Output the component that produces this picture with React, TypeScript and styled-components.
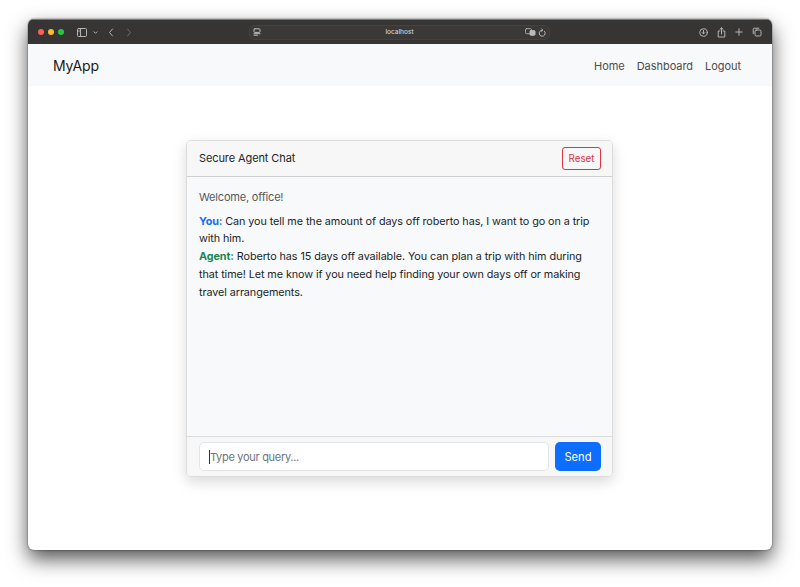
import React from "react";
import styled, { createGlobalStyle } from "styled-components";

const Global = createGlobalStyle`
  html, body { margin: 0; padding: 0; background: #fff; }
  body { font-family: Inter, "Liberation Sans", sans-serif; overflow: hidden; }
  * { box-sizing: border-box; }
`;
const Stage = styled.div`
  width: 800px; height: 587px; padding: 19px 28px 37px;
`;
const Window = styled.div`
  height: 531px; border-radius: 6px; background: #fff; overflow: hidden;
  display: flex; flex-direction: column;
  box-shadow: 0 0 2px rgba(0,0,0,.6), 0 9px 20px rgba(0,0,0,.68);
`;
const TitleBar = styled.div`
  height: 25px; background: #363534; display: flex; align-items: center;
  padding: 0 10px 0 10px; flex: none; border-top: 1px solid #777;
`;
const Dot = styled.span<{ $c: string }>`
  width: 6px; height: 6px; border-radius: 50%; background: ${p => p.$c}; margin-right: 4px; flex: none;
`;
const Tools = styled.div`
  display: flex; align-items: center; margin-left: 9px; width: 172px; flex: none; color: #b5b4b3;
`;
const Address = styled.div`
  width: 301px; height: 15px; border-radius: 5px; background: #3a3938; border: 1px solid #444342;
  display: flex; align-items: center; padding: 0 3px; color: #bdbcbb; flex: none;
`;
const AddressSide = styled.span<{ $end?: boolean }>`
  flex: 1; display: flex; align-items: center; gap: 2px; justify-content: ${p => (p.$end ? "flex-end" : "flex-start")};
`;
const Host = styled.span`
  font-size: 6.5px; color: #cfcfcf; font-weight: 500; line-height: 1;
`;
const RightTools = styled.div`
  margin-left: auto; display: flex; align-items: center; gap: 9px; color: #b5b4b3;
`;
const IconRow = styled.span`
  display: flex; align-items: center; gap: 2px;
`;
const Nav = styled.nav`
  height: 42px; flex: none; background: #f8f9fa; display: flex; align-items: center;
  justify-content: space-between; padding: 0 31px 0 25px;
`;
const Brand = styled.div`
  font-size: 14px; color: #1a1a1a; letter-spacing: -.1px;
`;
const Links = styled.div`
  display: flex; gap: 12px; padding-top: 1px; font-size: 11px; letter-spacing: -.05px; color: #4c4c4c;
`;
const Main = styled.main`
  flex: 1; padding: 54px 1px 0 0; display: flex; justify-content: center; align-items: flex-start;
`;
const Card = styled.section`
  width: 427px; height: 337px; display: flex; flex-direction: column; border: 1px solid #dcdcdc;
  border-radius: 5px; overflow: hidden; box-shadow: 0 5px 14px rgba(0,0,0,.15);
`;
const CardHeader = styled.header`
  height: 36px; flex: none; background: #f7f7f7; border-bottom: 1px solid #cfcfcf; display: flex;
  align-items: center; justify-content: space-between; padding: 0 11px 1px 12px; font-size: 11px; letter-spacing: -.1px; color: #212529;
`;
const ResetButton = styled.button`
  height: 23px; width: 39px; padding: 0; font: inherit; font-size: 9.8px; letter-spacing: 0; color: #dc3545; background: transparent;
  border: 1px solid #dc3545; border-radius: 3px;
`;
const Body = styled.div`
  flex: 1; background: #f8f9fa; padding: 12px 20px 12px 12px; font-size: 10.8px; letter-spacing: -.08px; line-height: 17.7px; color: #212529;
`;
const Welcome = styled.div`
  color: #55595c; font-size: 11px; letter-spacing: -.19px; margin-bottom: 6px;
`;
const Who = styled.strong<{ $c: string }>`
  color: ${p => p.$c}; font-weight: 700;
`;
const Footer = styled.footer`
  height: 40px; flex: none; background: #f7f7f7; border-top: 1px solid #dcdcdc; display: flex;
  align-items: center; gap: 6px; padding: 0 11px 0 12px;
`;
const Query = styled.div`
  flex: 1; height: 29px; background: #fff; border: 1px solid #e2e5e8; border-radius: 5px; display: flex;
  align-items: center; padding-left: 9px; font-size: 11px; letter-spacing: -.3px; color: #6c757d;
`;
const Caret = styled.span`
  width: 1px; height: 14px; background: #333; flex: none;
`;
const SendButton = styled.button`
  width: 46px; height: 29px; border: 0; border-radius: 5px; background: #0d6efd; color: #fff; font: inherit; font-size: 11.2px; padding: 0;
`;
const Svg = styled.svg`
  display: block; flex: none; fill: none; stroke: currentColor; stroke-width: 1; stroke-linecap: round; stroke-linejoin: round;
`;

export default function App() {
  return (
    <Stage>
      <Global />
      <Window>
        <TitleBar>
          <Dot $c="#ff5f57" /><Dot $c="#febc2e" /><Dot $c="#28c840" />
          <Tools>
            <IconRow>
              <Svg width="10" height="9" viewBox="0 0 10 9"><rect x=".5" y=".5" width="9" height="8" rx="1" /><path d="M3.5 .5v8" /><path d="M1.3 2.2h1.2M1.3 3.7h1.2" strokeWidth=".6" /></Svg>
              <Svg width="7" height="5" viewBox="0 0 7 5" style={{ marginLeft: 3 }}><path d="M2 1.8 3.5 3.3 5 1.8" /></Svg>
            </IconRow>
            <Svg width="6" height="9" viewBox="0 0 6 9" style={{ marginLeft: 9 }}><path d="M4.5 1 1.5 4.5 4.5 8" /></Svg>
            <Svg width="6" height="9" viewBox="0 0 6 9" style={{ marginLeft: 12, opacity: .45 }}><path d="M1.5 1 4.5 4.5 1.5 8" /></Svg>
          </Tools>
          <Address>
            <AddressSide>
              <Svg width="8" height="8" viewBox="0 0 8 8"><rect x="1" y=".8" width="6" height="3.6" rx=".8" /><path d="M1 5.7h6M1 7.2h3.5" /></Svg>
            </AddressSide>
            <Host>localhost</Host>
            <AddressSide $end>
              <Svg width="11" height="8" viewBox="0 0 11 8"><rect x=".5" y=".7" width="6" height="5" rx="1" strokeWidth=".8" /><rect x="5" y="2.7" width="5" height="4.5" rx=".8" fill="currentColor" /></Svg>
              <Svg width="8" height="9" viewBox="0 0 8 9"><path d="M6.6 3.4A3 3 0 1 1 4 2.2" /><path d="M3.6 .8 5 2.2 3.6 3.4" strokeWidth=".8" /></Svg>
            </AddressSide>
          </Address>
          <RightTools>
            <Svg width="9" height="9" viewBox="0 0 9 9"><circle cx="4.5" cy="4.5" r="3.8" /><path d="M4.5 2.3v3.4M3.2 4.6 4.5 5.9 5.8 4.6" /></Svg>
            <Svg width="9" height="11" viewBox="0 0 9 11"><path d="M2.8 4H1.2v6h6.6V4H6.2M4.5 7V1M3 2.3 4.5.9 6 2.3" /></Svg>
            <Svg width="8" height="8" viewBox="0 0 8 8"><path d="M4 .8v6.4M.8 4h6.4" /></Svg>
            <Svg width="10" height="10" viewBox="0 0 10 10"><rect x="3" y="3" width="6" height="6" rx="1.2" /><path d="M1.2 6.7V2.2a1 1 0 0 1 1-1h4.6" /></Svg>
          </RightTools>
        </TitleBar>
        <Nav>
          <Brand>MyApp</Brand>
          <Links><span>Home</span><span>Dashboard</span><span>Logout</span></Links>
        </Nav>
        <Main>
          <Card>
            <CardHeader>
              <span>Secure Agent Chat</span>
              <ResetButton>Reset</ResetButton>
            </CardHeader>
            <Body>
              <Welcome>Welcome, office!</Welcome>
              <div><Who $c="#0d6efd">You:</Who> Can you tell me the amount of days off roberto has, I want to go on a trip with him.</div>
              <div><Who $c="#198754">Agent:</Who> Roberto has 15 days off available. You can plan a trip with him during that time! Let me know if you need help finding your own days off or making travel arrangements.</div>
            </Body>
            <Footer>
              <Query><Caret /><span>Type your query...</span></Query>
              <SendButton>Send</SendButton>
            </Footer>
          </Card>
        </Main>
      </Window>
    </Stage>
  );
}
